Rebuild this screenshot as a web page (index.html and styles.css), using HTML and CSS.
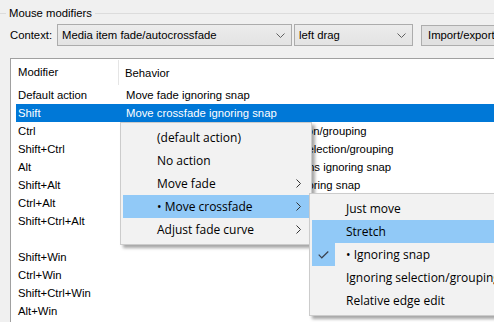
FILE: index.html
```html
<!DOCTYPE html>
<html lang="en">
<head>
    <meta charset="UTF-8">
    <title>Mouse modifiers</title>
    <link rel="stylesheet" href="styles.css">
</head>
<body>
    <div class="dialog">
        <div class="group-title">
            <span class="line short"></span>
            <span class="caption">Mouse modifiers</span>
            <span class="line"></span>
        </div>

        <div class="context-row">
            <span class="label">Context:</span>
            <div class="combo wide">
                <span>Media item fade/autocrossfade</span>
                <svg width="9" height="5" viewBox="0 0 9 5"><polyline points="0.5,0.5 4.5,4.5 8.5,0.5" fill="none" stroke="#606060"/></svg>
            </div>
            <div class="combo narrow">
                <span>left drag</span>
                <svg width="9" height="5" viewBox="0 0 9 5"><polyline points="0.5,0.5 4.5,4.5 8.5,0.5" fill="none" stroke="#606060"/></svg>
            </div>
            <button class="btn">Import/export...</button>
        </div>

        <div class="list">
            <div class="list-head">
                <div class="col-mod">Modifier</div>
                <div class="col-beh">Behavior</div>
            </div>
            <div class="row"><span class="mod">Default action</span><span class="beh">Move fade ignoring snap</span></div>
            <div class="row selected"><span class="mod">Shift</span><span class="beh">Move crossfade ignoring snap</span></div>
            <div class="row"><span class="mod">Ctrl</span><span class="beh">Move fade ignoring snap and selection/grouping</span></div>
            <div class="row"><span class="mod">Shift+Ctrl</span><span class="beh">Move crossfade ignoring snap and selection/grouping</span></div>
            <div class="row"><span class="mod">Alt</span><span class="beh">Stretch crossfade for all selected items ignoring snap</span></div>
            <div class="row"><span class="mod">Shift+Alt</span><span class="beh">Stretch fade of all selected items ignoring snap</span></div>
            <div class="row"><span class="mod">Ctrl+Alt</span><span class="beh"></span></div>
            <div class="row"><span class="mod">Shift+Ctrl+Alt</span><span class="beh"></span></div>
            <div class="row"><span class="mod"></span><span class="beh"></span></div>
            <div class="row"><span class="mod">Shift+Win</span><span class="beh"></span></div>
            <div class="row"><span class="mod">Ctrl+Win</span><span class="beh"></span></div>
            <div class="row"><span class="mod">Shift+Ctrl+Win</span><span class="beh"></span></div>
            <div class="row"><span class="mod">Alt+Win</span><span class="beh"></span></div>
        </div>

        <!-- popup menus -->
        <div class="menu menu-main">
            <div class="item"><span class="check"></span><span class="text">(default action)</span></div>
            <div class="item"><span class="check"></span><span class="text">No action</span></div>
            <div class="item"><span class="check"></span><span class="text">Move fade</span>
                <svg class="arrow" width="5" height="9" viewBox="0 0 5 9"><polyline points="0.5,0.5 4.5,4.5 0.5,8.5" fill="none" stroke="#333"/></svg></div>
            <div class="item hover"><span class="check"></span><span class="text">• Move crossfade</span>
                <svg class="arrow" width="5" height="9" viewBox="0 0 5 9"><polyline points="0.5,0.5 4.5,4.5 0.5,8.5" fill="none" stroke="#333"/></svg></div>
            <div class="item"><span class="check"></span><span class="text">Adjust fade curve</span>
                <svg class="arrow" width="5" height="9" viewBox="0 0 5 9"><polyline points="0.5,0.5 4.5,4.5 0.5,8.5" fill="none" stroke="#333"/></svg></div>
        </div>

        <div class="menu menu-sub">
            <div class="item"><span class="check"></span><span class="text">Just move</span></div>
            <div class="item hover"><span class="check"></span><span class="text">Stretch</span></div>
            <div class="item"><span class="check on">
                <svg width="11" height="8" viewBox="0 0 11 8"><polyline points="0.7,3.7 3.8,6.8 10.3,0.5" fill="none" stroke="#3a4250" stroke-width="1.2"/></svg>
            </span><span class="text">• Ignoring snap</span></div>
            <div class="item"><span class="check"></span><span class="text">Ignoring selection/grouping</span></div>
            <div class="item"><span class="check"></span><span class="text">Relative edge edit</span></div>
        </div>
    </div>
</body>
</html>
```

FILE: styles.css
```css
body {
    margin: 0;
    padding: 0;
    background: #f0f0f0;
    font-family: "Liberation Sans", Arial, sans-serif;
    font-size: 11.3px;
    color: #000;
}
.dialog {
    position: relative;
    width: 494px;
    height: 322px;
    overflow: hidden;
    background: #f0f0f0;
}

/* group box caption */
.group-title {
    display: flex;
    align-items: center;
    height: 14px;
    margin-top: 6px;
}
.group-title .line {
    flex: 1;
    height: 1px;
    background: #dcdcdc;
}
.group-title .line.short {
    flex: 0 0 6px;
}
.group-title .caption {
    padding: 0 3px;
}

/* context row */
.context-row {
    display: flex;
    align-items: center;
    height: 22px;
    margin: 4px 0 0 10px;
}
.context-row > * {
    flex-shrink: 0;
}
.context-row .label {
    width: 47px;
}
.combo {
    box-sizing: border-box;
    display: flex;
    align-items: center;
    justify-content: space-between;
    height: 22px;
    padding: 0 6px 0 4px;
    background: linear-gradient(#ececec, #e3e3e3);
    border: 1px solid #acacac;
    white-space: nowrap;
}
.combo.wide {
    width: 235px;
}
.combo.narrow {
    width: 119px;
    margin-left: 2px;
}
.btn {
    box-sizing: border-box;
    width: 96px;
    height: 21px;
    margin-left: 8px;
    padding: 0 0 0 6px;
    text-align: left;
    font: inherit;
    color: #000;
    background: #e1e1e1;
    border: 1px solid #adadad;
    white-space: nowrap;
    overflow: hidden;
}

/* list view */
.list {
    box-sizing: border-box;
    width: 500px;
    height: 300px;
    margin: 12px 0 0 10px;
    background: #fff;
    border: 1px solid #a0a0a0;
}
.list-head {
    display: flex;
    height: 27px;
    align-items: center;
}
.list-head .col-mod {
    box-sizing: border-box;
    width: 108px;
    height: 25px;
    line-height: 25px;
    padding-left: 7px;
    border-right: 1px solid #e5e5e5;
}
.list-head .col-beh {
    padding-left: 6px;
}
.row {
    display: flex;
    height: 18px;
    line-height: 18px;
    margin-left: 5px;
    white-space: nowrap;
}
.row .mod {
    flex: 0 0 108px;
    padding-left: 2px;
    box-sizing: border-box;
}
.row .beh {
    flex: 1;
    padding-left: 2px;
}
.row.selected {
    background: #0078d7;
    color: #fff;
}

/* popup menus */
.menu {
    position: absolute;
    box-sizing: border-box;
    padding: 3px 2px;
    background: #f2f2f2;
    border: 1px solid #cccccc;
    box-shadow: 3px 3px 3px rgba(0, 0, 0, 0.35);
    font-family: "Open Sans", "Noto Sans", sans-serif;
    font-size: 12px;
    color: #000;
}
.menu-main {
    left: 120px;
    top: 122px;
    width: 192px;
}
.menu-sub {
    left: 309px;
    top: 193px;
    width: 210px;
}
.item {
    display: flex;
    align-items: center;
    height: 23px;
    white-space: nowrap;
}
.item.hover {
    background: #91c9f7;
}
.item .check {
    display: flex;
    align-items: center;
    justify-content: center;
    flex: 0 0 23px;
    height: 23px;
}
.item .check.on {
    background: #91c9f7;
}
.item .text {
    flex: 1;
    margin-left: 11px;
}
.item .arrow {
    margin-right: 8px;
}
```
